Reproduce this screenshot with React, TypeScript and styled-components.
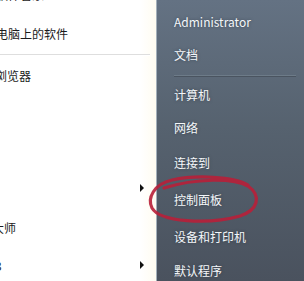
import React from 'react'
import styled, { createGlobalStyle } from 'styled-components'

const GlobalStyle = createGlobalStyle`
	html, body {
		margin: 0;
		padding: 0;
		overflow: hidden;
		background: #ffffff;
	}
	body {
		font-family: 'Noto Sans CJK SC', 'Noto Sans', sans-serif;
	}
`

const Menu = styled.div`
	position: relative;
	display: flex;
	width: 304px;
	height: 281px;
	overflow: hidden;
`

const LeftPane = styled.div`
	width: 156px;
	flex: none;
	display: flex;
	flex-direction: column;
	overflow: hidden;
	background: linear-gradient(90deg, #ffffff 0%, #ffffff 90%, #fffcf1 100%);
`

const RightPane = styled.div`
	flex: 1;
	display: flex;
	flex-direction: column;
	padding-left: 17px;
	padding-right: 8px;
	border-left: 1px solid #a3afba;
	background: linear-gradient(180deg, #647283 0%, #56626f 45%, #4a525e 100%);
`

const Item = styled.div<{ $top?: number; $h?: number }>`
	display: flex;
	align-items: center;
	flex: none;
	height: ${(p) => p.$h ?? 34}px;
	margin-top: ${(p) => p.$top ?? 0}px;
	font-size: 12px;
	white-space: nowrap;
`

const LeftItem = styled(Item)`
	color: #1b1b1b;
	padding-right: 12px;
`

const RightItem = styled(Item)`
	color: #f4f7fa;
	text-shadow: 0 0 3px rgba(40, 50, 60, 0.6);
`

const Clipped = styled.span<{ $shift: number }>`
	margin-left: ${(p) => -p.$shift}px;
	flex: 1;
`

const Arrow = styled.span`
	margin-left: auto;
	width: 0;
	height: 0;
	border-top: 4px solid transparent;
	border-bottom: 4px solid transparent;
	border-left: 4px solid #111;
`

const LeftRule = styled.div`
	height: 1px;
	margin-top: 4px;
	border-top: 1px solid #dedede;
	border-bottom: 1px solid #ffffff;
	margin-right: 6px;
`

const RightRule = styled.div`
	height: 0;
	margin-top: 4px;
	border-top: 1px solid #6d7b88;
	border-bottom: 1px solid #4a5460;
`

const Annotation = styled.svg`
	position: absolute;
	left: 144px;
	top: 172px;
	width: 120px;
	height: 56px;
	pointer-events: none;
`

export default function App() {
	return (
		<Menu>
			<GlobalStyle />
			<LeftPane>
				<LeftItem $top={-16} $h={20}>
					<Clipped $shift={4}>软件管家</Clipped>
				</LeftItem>
				<LeftItem $top={12}>
					<Clipped $shift={28}>卸载电脑上的软件</Clipped>
				</LeftItem>
				<LeftRule />
				<LeftItem $top={2}>
					<Clipped $shift={49}>360安全浏览器</Clipped>
				</LeftItem>
				<LeftItem $top={79}>
					<Arrow />
				</LeftItem>
				<LeftItem $top={5}>
					<Clipped $shift={20}>鲁大师</Clipped>
				</LeftItem>
				<LeftItem $top={4}>
					<Clipped $shift={56}>Excel 2013</Clipped>
					<Arrow />
				</LeftItem>
			</LeftPane>
			<RightPane>
				<RightItem $top={5} $h={33}>Administrator</RightItem>
				<RightItem $h={33}>文档</RightItem>
				<RightRule />
				<RightItem $top={1} $h={33}>计算机</RightItem>
				<RightItem $h={33}>网络</RightItem>
				<RightItem $top={1}>连接到</RightItem>
				<RightItem $top={3}>控制面板</RightItem>
				<RightItem $top={3}>设备和打印机</RightItem>
				<RightItem>默认程序</RightItem>
			</RightPane>
			<Annotation viewBox="0 0 120 56">
				<path
					d="M104 13 C90 4 50 3 28 8 C10 12 3 26 8 36 C16 50 64 53 96 44 C114 38 118 24 104 14 C90 6 52 6 20 16"
					fill="none"
					stroke="#b81f38"
					strokeWidth="3.2"
					strokeLinecap="round"
					opacity="0.9"
				/>
			</Annotation>
		</Menu>
	)
}
